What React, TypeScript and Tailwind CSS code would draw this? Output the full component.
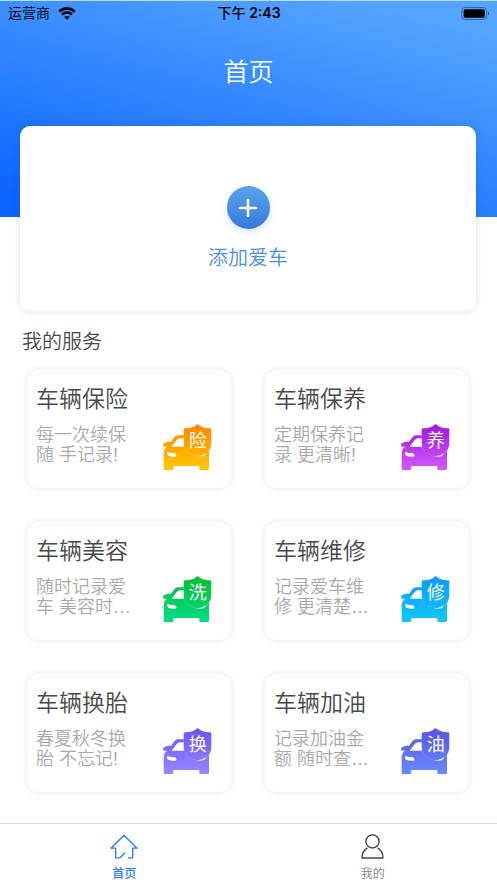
import { useState } from "react";

type Service = {
  id: string;
  title: string;
  desc: string;
  badge: string;
  from: string;
  to: string;
};

const SERVICES: Service[] = [
  { id: "insurance", title: "车辆保险", desc: "每一次续保随 手记录!", badge: "险", from: "#ff8a00", to: "#ffc400" },
  { id: "maintain", title: "车辆保养", desc: "定期保养记录 更清晰!", badge: "养", from: "#a31bdb", to: "#cf55ff" },
  { id: "beauty", title: "车辆美容", desc: "随时记录爱车 美容时…", badge: "洗", from: "#05bf35", to: "#06dc82" },
  { id: "repair", title: "车辆维修", desc: "记录爱车维修 更清楚…", badge: "修", from: "#0a9bff", to: "#12c6f6" },
  { id: "tire", title: "车辆换胎", desc: "春夏秋冬换胎 不忘记!", badge: "换", from: "#6c57fa", to: "#9484ff" },
  { id: "fuel", title: "车辆加油", desc: "记录加油金额 随时查…", badge: "油", from: "#5858e2", to: "#6886ff" },
];

function WifiIcon() {
  return (
    <svg viewBox="0 0 54 40" className="h-[13px] w-[18px]" aria-hidden="true">
      <g fill="none" stroke="#000" strokeWidth="8">
        <path d="M3 14.5C17 1 37 1 51 14.5" />
        <path d="M11.5 23.5C20.5 15 33.5 15 42.5 23.5" />
      </g>
      <path d="M18.5 31C23.5 26.5 30.5 26.5 35.5 31L27 39.5Z" />
    </svg>
  );
}

function BatteryIcon() {
  return (
    <svg viewBox="0 0 87 40" className="h-[13px] w-[29px]" aria-hidden="true">
      <rect x="1.5" y="1.5" width="76" height="37" rx="10" fill="none" stroke="#000" strokeOpacity="0.4" strokeWidth="3" />
      <rect x="7" y="7" width="65" height="26" rx="5" />
      <path d="M82 14C86 15.500 86 24.500 82 26Z" fillOpacity="0.5" />
    </svg>
  );
}

function CarIcon({ id, badge, from, to }: Service) {
  const fill = `url(#car-${id})`;
  return (
    <svg viewBox="0 0 147 138" className="h-[46px] w-[49px] shrink-0" aria-hidden="true">
      <defs>
        <linearGradient id={`car-${id}`} gradientUnits="userSpaceOnUse" x1="0" y1="10" x2="0" y2="130">
          <stop offset="0" stopColor={from} />
          <stop offset="1" stopColor={to} />
        </linearGradient>
      </defs>
      <path
        fill={fill}
        fillRule="evenodd"
        d="M0 62Q1 58 6 56L16 53Q21 52 24 54L34 40Q38 34 46 34H96Q103 34 108 41L124 66Q138 72 138 86V134Q138 138 134 138H113Q109 138 109 134V126H31V134Q31 138 27 138H6Q2 138 2 134V84Q2 76 12 68H4Q0 68 0 62ZM26 68H76V43H52Q45 43 41 48ZM12 84Q10 92 16 95Q22 98 38 98Q42 97 39 91Q37 87 30 87Q20 87 12 84ZM128 84Q130 92 124 95Q118 98 102 98Q98 97 101 91Q103 87 110 87Q120 87 128 84Z"
      />
      <path
        fill={fill}
        stroke="#fff"
        strokeOpacity="0.2"
        strokeWidth="2"
        d="M104 0Q108 4 116 8Q128 13 142 13Q145 13 145 17V58Q145 76 132 86Q121 94 104 98Q87 94 76 86Q62 76 62 58V17Q62 13 66 13Q80 13 92 8Q100 4 104 0Z"
      />
      <text
        x="104"
        y="69"
        textAnchor="middle"
        fontSize="54"
        fontWeight="400"
        fill="#fff"
      >
        {badge}
      </text>
    </svg>
  );
}

function ServiceCard({ service }: { service: Service }) {
  return (
    <button
      type="button"
      className="rounded-xl bg-white pt-[13px] pr-[19px] pb-[18px] pl-[9px] text-left shadow-[0_0_7px_rgba(0,0,0,0.11)]"
    >
      <span className="block text-[23px] leading-8 text-[#4a4a4a]">{service.title}</span>
      <span className="mt-[9px] flex items-end justify-between">
        <span className="mb-[5px] block w-24 text-lg leading-5 text-[#aaa]">{service.desc}</span>
        <CarIcon {...service} />
      </span>
    </button>
  );
}

function HomeIcon() {
  return (
    <svg viewBox="0 0 84 74" className="h-[25px] w-7" fill="none" stroke="currentColor" strokeWidth="4" aria-hidden="true">
      <path d="M54 71H68V42H81L42 3L3 42H17V71H30L45 56" strokeLinejoin="round" />
    </svg>
  );
}

function UserIcon() {
  return (
    <svg viewBox="0 0 68 74" className="h-[25px] w-[23px] text-[#444]" fill="none" stroke="currentColor" strokeWidth="4" aria-hidden="true">
      <circle cx="34" cy="22" r="19.500" />
      <path d="M19 41Q3 50 3 71H65Q65 50 49 41" strokeLinejoin="round" />
    </svg>
  );
}

const TABS = [
  { key: "home", label: "首页", icon: <HomeIcon /> },
  { key: "mine", label: "我的", icon: <UserIcon /> },
];

export default function App() {
  const [tab, setTab] = useState("home");

  return (
    <div className="flex min-h-screen flex-col bg-white font-['Liberation_Sans','Noto_Sans_CJK_SC',sans-serif] font-[350]">
      <header className="border-t border-[#b9dcff] bg-[linear-gradient(195deg,#54a5ff_10%,#2b80ff_58%,#0a66ff_92%)] pb-[127px]">
        <div className="grid grid-cols-3 items-center pt-0.5 pr-[7px] pl-2 text-sm leading-5 text-black">
          <div className="flex items-center gap-2">
            运营商
            <WifiIcon />
          </div>
          <div className="text-center font-['Inter','Noto_Sans_CJK_SC',sans-serif] font-medium">
            下午 <span className="font-semibold">2:43</span>
          </div>
          <div className="flex justify-end">
            <BatteryIcon />
          </div>
        </div>
        <h1 className="mt-[31px] text-center text-[25px] leading-9 text-white">首页</h1>
      </header>

      <main className="-mt-[91px] flex-1 pr-[21px] pl-5">
        <button
          type="button"
          className="flex w-full flex-col items-center rounded-[10px] bg-white pt-[60px] pb-[39px] shadow-[0_0_8px_rgba(0,0,0,0.12)]"
        >
          <span className="flex size-[43px] items-center justify-center rounded-full bg-linear-to-b from-[#5aa5ea] to-[#3878dc] shadow-[0_3px_8px_rgba(56,120,220,0.2)]">
            <svg viewBox="0 0 18 18" className="size-[18px]" stroke="#fff" strokeWidth="2.500" strokeLinecap="round" aria-hidden="true">
              <path d="M9 1V17M1 9H17" />
            </svg>
          </span>
          <span className="mt-[15px] text-xl leading-7 text-[#4a90e2]">添加爱车</span>
        </button>

        <h2 className="mt-[17px] pl-0.5 text-xl leading-7 text-[#4a4a4a]">我的服务</h2>
        <div className="mt-3.5 grid grid-cols-2 gap-[34px] px-[7px] pb-[31px]">
          {SERVICES.map((s) => (
            <ServiceCard key={s.id} service={s} />
          ))}
        </div>
      </main>

      <nav className="grid grid-cols-2 border-t border-[#dcdcdc] bg-white">
        {TABS.map((t) => (
          <button
            key={t.key}
            type="button"
            onClick={() => setTab(t.key)}
            aria-current={tab === t.key ? "page" : undefined}
            className={`flex flex-col items-center gap-1.5 pt-2.5 text-xs leading-[18px] ${
              tab === t.key ? "font-medium text-[#2b7cff]" : "font-normal text-[#888]"
            }`}
          >
            {t.icon}
            {t.label}
          </button>
        ))}
      </nav>
    </div>
  );
}
